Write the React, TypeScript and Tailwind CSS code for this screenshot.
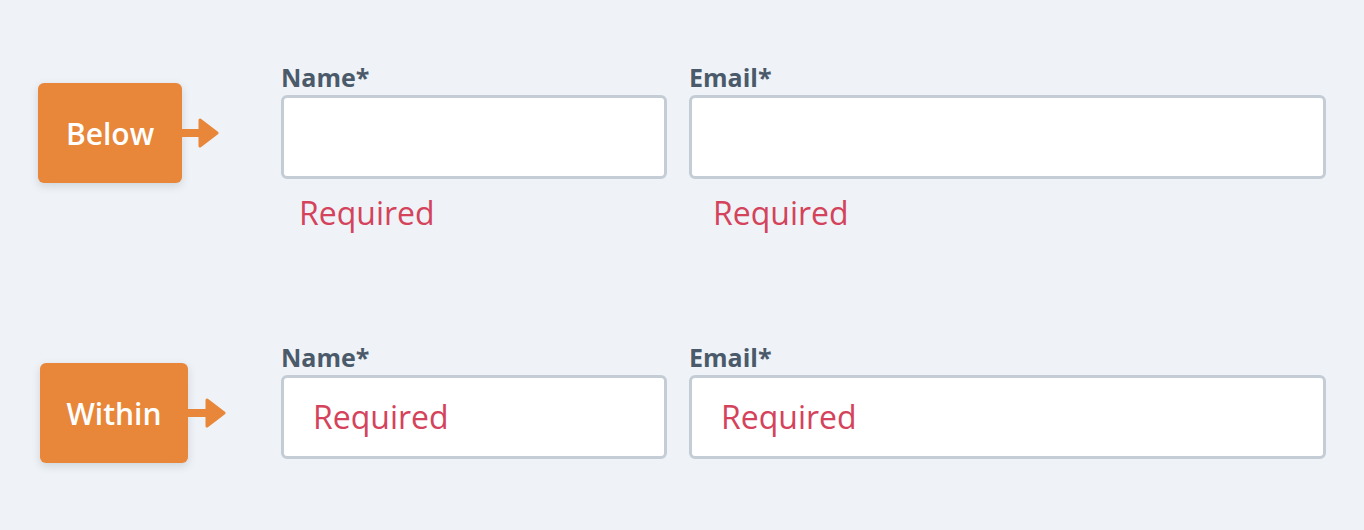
const font = { fontFamily: '"Open Sans", "Noto Sans", sans-serif' };

function Arrow({ width }: { width: number }) {
  return (
    <svg width={width} height="32" viewBox={`0 0 ${width} 32`} className="block">
      <rect x="0" y="12" width={width - 14} height="8" fill="#e8863a" />
      <path
        d={`M${width - 19} 3 L${width - 2} 16 L${width - 19} 29 Z`}
        fill="#e8863a"
        stroke="#e8863a"
        strokeWidth="3"
        strokeLinejoin="round"
      />
    </svg>
  );
}

function Badge({ label, w, arrow }: { label: string; w: number; arrow: number }) {
  return (
    <div className="flex items-center">
      <div
        className="flex h-[100px] items-center justify-center rounded-[6px] bg-[#e8863a] text-[30px] font-semibold text-white shadow-[0_3px_8px_rgba(60,70,90,0.18)]"
        style={{ width: w }}
      >
        {label}
      </div>
      <Arrow width={arrow} />
    </div>
  );
}

function Field({ label, inside, errPad, className }: { label: string; inside: boolean; errPad: number; className: string }) {
  return (
    <div className={className}>
      <div className="mb-[3px] text-[25px] font-bold leading-[30px] text-[#4a5a6a]">{label}</div>
      <div className="flex h-[84px] items-center rounded-[6px] border-[3px] border-[#c4cdd5] bg-white pl-[29px]">
        {inside && <span className="text-[32px] leading-[40px] text-[#d4435b]">Required</span>}
      </div>
      {!inside && (
        <div className="mt-[14px] text-[32px] leading-[40px] text-[#d4435b]" style={{ paddingLeft: errPad }}>
          Required
        </div>
      )}
    </div>
  );
}

function Row({ label, badgeW, arrow, padLeft, inside }: { label: string; badgeW: number; arrow: number; padLeft: number; inside: boolean }) {
  return (
    <div className="flex items-start pr-[38px]">
      <div className="w-[281px] shrink-0 pt-[21px]" style={{ paddingLeft: padLeft }}>
        <Badge label={label} w={badgeW} arrow={arrow} />
      </div>
      <div className="flex flex-1 gap-[22px]">
        <Field label="Name*" inside={inside} errPad={18} className="w-[386px] shrink-0" />
        <Field label="Email*" inside={inside} errPad={24} className="flex-1" />
      </div>
    </div>
  );
}

export default function App() {
  return (
    <div className="h-[530px] w-[1364px] bg-[#eff3f7] pt-[62px]" style={font}>
      <Row label="Below" badgeW={144} arrow={37} padLeft={38} inside={false} />
      <div className="h-[109px]" />
      <Row label="Within" badgeW={148} arrow={38} padLeft={40} inside={true} />
    </div>
  );
}
